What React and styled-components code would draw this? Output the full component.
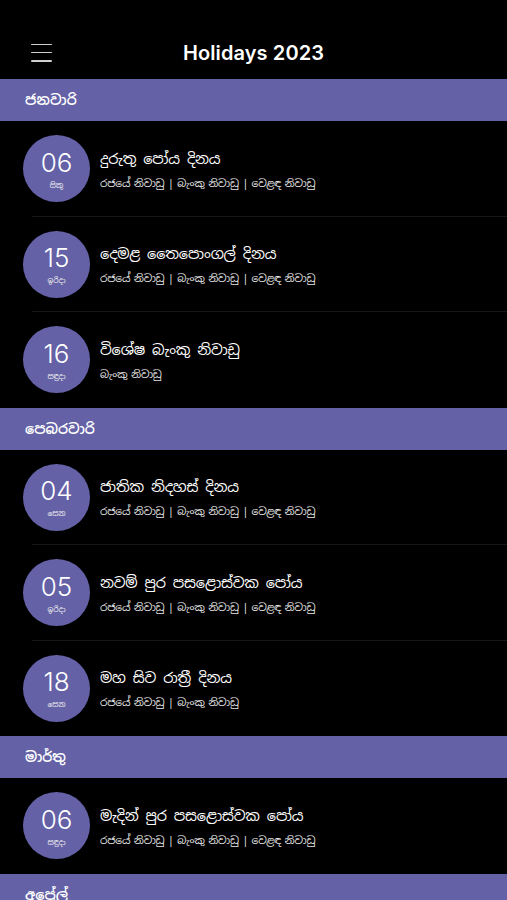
import React from "react";
import styled, { createGlobalStyle } from "styled-components";

const Global = createGlobalStyle`
  html, body { margin: 0; padding: 0; background: #000; }
  body { overflow: hidden; font-family: "Noto Sans Sinhala", "Inter", "Noto Sans", "DejaVu Sans", sans-serif; color: #fff; }
`;

const Page = styled.div`
  width: 507px;
  height: 900px;
  overflow: hidden;
  background: #000;
  display: flex;
  flex-direction: column;
`;

const NavBar = styled.header`
  height: 79px;
  flex-shrink: 0;
  box-sizing: border-box;
  padding-top: 26px;
  display: grid;
  grid-template-columns: 80px 1fr 80px;
  align-items: center;
`;

const MenuButton = styled.div`
  width: 21px;
  height: 18px;
  margin-left: 31px;
  display: flex;
  flex-direction: column;
  justify-content: space-between;
  span {
    display: block;
    height: 1.6px;
    background: #d0d0d0;
    border-radius: 1px;
  }
`;

const Title = styled.h1`
  margin: 0;
  text-align: center;
  font-family: "Inter", "Liberation Sans", sans-serif;
  font-size: 20px;
  font-weight: 600;
  color: #fff;
  letter-spacing: 0.1px;
`;

const SectionHeader = styled.div`
  height: 42px;
  flex-shrink: 0;
  background: #6461a6;
  display: flex;
  align-items: center;
  padding-left: 25px;
  font-size: 14px;
  font-weight: 600;
  color: #fff;
`;

const Row = styled.div`
  height: 95.5px;
  flex-shrink: 0;
  position: relative;
  display: flex;
  align-items: center;
  padding-left: 23px;
  gap: 10px;
  ${(p) =>
    p.$divider &&
    `&::after {
      content: "";
      position: absolute;
      left: 32px;
      right: 0;
      bottom: 0;
      height: 1px;
      background: #161616;
    }`}
`;

const DateCircle = styled.div`
  width: 67px;
  height: 67px;
  border-radius: 50%;
  background: #6461a6;
  display: flex;
  flex-direction: column;
  align-items: center;
  justify-content: center;
  flex-shrink: 0;
  padding-top: 2px;
  box-sizing: border-box;
`;

const DayNum = styled.div`
  font-family: "Inter", "Liberation Sans", sans-serif;
  font-weight: 300;
  font-size: 26px;
  line-height: 28px;
  color: #fff;
`;

const DayName = styled.div`
  font-size: 7.5px;
  line-height: 12px;
  margin-top: 2px;
  color: #f0f0f0;
`;

const TextBlock = styled.div`
  display: flex;
  flex-direction: column;
  gap: 6px;
  margin-top: 2px;
`;

const HolidayName = styled.div`
  font-size: 14.5px;
  line-height: 20px;
  letter-spacing: -0.2px;
  color: #fff;
`;

const HolidayTypes = styled.div`
  font-size: 10.5px;
  line-height: 16px;
  letter-spacing: -0.2px;
  word-spacing: -1.5px;
  color: #e6e6e6;
`;

const ALL = "රජයේ නිවාඩු | බැංකු නිවාඩු | වෙළඳ නිවාඩු";

const data = [
  {
    month: "ජනවාරි",
    items: [
      { d: "06", day: "සිකු", name: "දුරුතු පෝය දිනය", types: ALL },
      { d: "15", day: "ඉරිදා", name: "දෙමළ තෛපොංගල් දිනය", types: ALL },
      { d: "16", day: "සඳුදා", name: "විශේෂ බැංකු නිවාඩු", types: "බැංකු නිවාඩු" },
    ],
  },
  {
    month: "පෙබරවාරි",
    items: [
      { d: "04", day: "සෙන", name: "ජාතික නිදහස් දිනය", types: ALL },
      { d: "05", day: "ඉරිදා", name: "නවම් පුර පසළොස්වක පෝය", types: ALL },
      { d: "18", day: "සෙන", name: "මහ සිව රාත්‍රී දිනය", types: "රජයේ නිවාඩු | බැංකු නිවාඩු" },
    ],
  },
  {
    month: "මාර්තු",
    items: [
      { d: "06", day: "සඳුදා", name: "මැදින් පුර පසළොස්වක පෝය", types: ALL },
    ],
  },
  {
    month: "අප්‍රේල්",
    items: [
      { d: "05", day: "බදාදා", name: "බක් පුර පසළොස්වක පෝය", types: ALL },
    ],
  },
];

export default function App() {
  return (
    <>
      <Global />
      <Page>
        <NavBar>
          <MenuButton>
            <span />
            <span />
            <span />
          </MenuButton>
          <Title>Holidays 2023</Title>
          <div />
        </NavBar>
        {data.map((sec) => (
          <React.Fragment key={sec.month}>
            <SectionHeader>{sec.month}</SectionHeader>
            {sec.items.map((it, i) => (
              <Row key={i} $divider={i < sec.items.length - 1}>
                <DateCircle>
                  <DayNum>{it.d}</DayNum>
                  <DayName>{it.day}</DayName>
                </DateCircle>
                <TextBlock>
                  <HolidayName>{it.name}</HolidayName>
                  <HolidayTypes>{it.types}</HolidayTypes>
                </TextBlock>
              </Row>
            ))}
          </React.Fragment>
        ))}
      </Page>
    </>
  );
}
